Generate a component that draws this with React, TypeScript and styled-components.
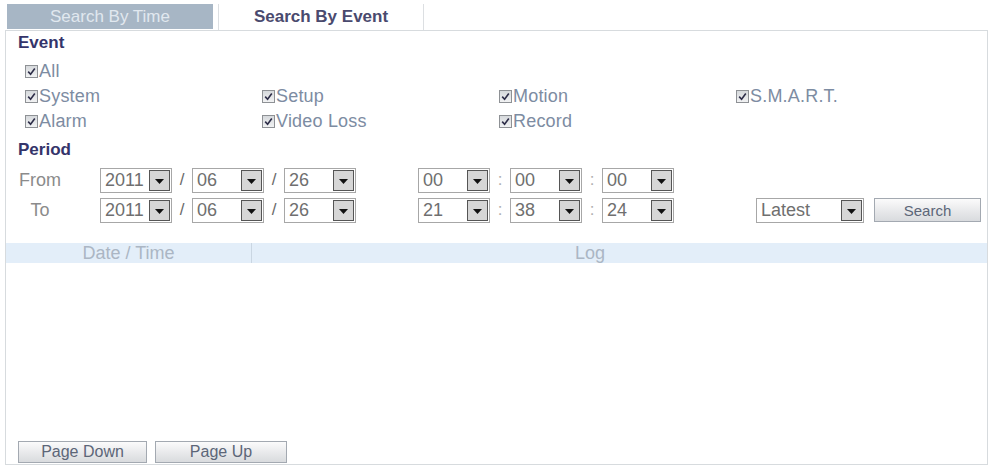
import React from "react";
import styled, { createGlobalStyle } from "styled-components";

const Global = createGlobalStyle`
  html, body { margin: 0; padding: 0; background: #ffffff; }
  body { font-family: "Liberation Sans", Arial, sans-serif; }
  * { box-sizing: border-box; }
`;

const Page = styled.div`
  width: 990px;
  height: 467px;
  padding-left: 5px;
  overflow: hidden;
`;

const TabBar = styled.div`
  display: flex;
  align-items: flex-start;
  height: 30px;
  padding: 4px 0 0 2px;
  gap: 5px;
`;

const Tab = styled.div<{ $active?: boolean }>`
  width: 206px;
  height: ${(p) => (p.$active ? "26px" : "25px")};
  display: flex;
  align-items: center;
  justify-content: center;
  font-size: 17px;
  font-weight: ${(p) => (p.$active ? 700 : 400)};
  color: ${(p) => (p.$active ? "#4a4a6e" : "#e1e8ef")};
  background: ${(p) => (p.$active ? "#ffffff" : "#a7b6c5")};
  border-left: ${(p) => (p.$active ? "1px solid #dcdfe2" : "none")};
  border-right: ${(p) => (p.$active ? "1px solid #dcdfe2" : "none")};
`;

const Panel = styled.div`
  width: 983px;
  height: 435px;
  border: 1px solid #d7dbde;
  display: flex;
  flex-direction: column;
`;

const Heading = styled.div<{ $top: number }>`
  margin: ${(p) => p.$top}px 0 0 12px;
  height: 20px;
  line-height: 20px;
  font-size: 17px;
  font-weight: 700;
  color: #34346a;
`;

const CheckGrid = styled.div`
  display: grid;
  grid-template-columns: repeat(4, 237px);
  grid-auto-rows: 25px;
  margin-top: 6px;
  padding-left: 19px;
`;

const CheckItem = styled.label<{ $full?: boolean }>`
  display: flex;
  align-items: center;
  gap: 1px;
  font-size: 18px;
  letter-spacing: 0.2px;
  color: #7d8ca2;
  grid-column: ${(p) => (p.$full ? "1 / -1" : "auto")};
`;

const Box = styled.span`
  width: 13px;
  height: 13px;
  border: 1px solid #8e9195;
  background: linear-gradient(#d6d9dc, #f1f2f3);
  display: flex;
  align-items: center;
  justify-content: center;
`;

const FormRows = styled.div`
  margin-top: 5px;
`;

const FormRow = styled.div`
  display: flex;
  align-items: center;
  height: 30px;
`;

const RowLabel = styled.div`
  width: 68px;
  margin-right: 26px;
  text-align: center;
  font-size: 18px;
  color: #8b8b8b;
`;

const Select = styled.div<{ $w: number }>`
  width: ${(p) => p.$w}px;
  height: 25px;
  border: 1px solid #a7a7a7;
  background: #ffffff;
  display: flex;
  align-items: center;
  padding-left: 4px;
  font-size: 18px;
  color: #6f6f6f;
`;

const Arrow = styled.span`
  margin-left: auto;
  margin-right: 1px;
  width: 21px;
  height: 21px;
  border: 1px solid #555555;
  background: #d6d6d6;
  display: flex;
  align-items: center;
  justify-content: center;
  padding-top: 3px;
`;

const Sep = styled.span<{ $light?: boolean }>`
  width: 20px;
  text-align: center;
  font-size: 17px;
  color: ${(p) => (p.$light ? "#b0b0b0" : "#6a6a6a")};
`;

const TimeGroup = styled.div`
  display: flex;
  align-items: center;
  margin-left: 62px;
`;

const QueryGroup = styled.div`
  display: flex;
  align-items: center;
  margin-left: 82px;
  gap: 10px;
`;

const Button = styled.button<{ $w: number; $h: number; $fs: number }>`
  width: ${(p) => p.$w}px;
  height: ${(p) => p.$h}px;
  padding: 0;
  border: 1px solid #a3a9b1;
  background: linear-gradient(#fbfbfb, #e6e7e9 60%, #d9dbde);
  font-family: "Liberation Sans", Arial, sans-serif;
  font-size: ${(p) => p.$fs}px;
  color: #5c6678;
`;

const TableHead = styled.div`
  margin-top: 18px;
  height: 20px;
  display: flex;
  background: #e3eef9;
  font-size: 18px;
  line-height: 20px;
  color: #abb6c4;
`;

const HeadCell = styled.div<{ $w: number; $divider?: boolean }>`
  width: ${(p) => p.$w}px;
  text-align: center;
  border-right: ${(p) => (p.$divider ? "1px solid #cad6e2" : "none")};
`;

const TableBody = styled.div`
  flex: 1;
`;

const Footer = styled.div`
  display: flex;
  gap: 8px;
  padding: 0 0 1px 12px;
`;

const Check = () => (
  <svg width="9" height="9" viewBox="0 0 9 9">
    <path d="M1.2 4.6 L3.6 7.2 L7.8 1.6" fill="none" stroke="#2d2d48" strokeWidth="1.6" />
  </svg>
);

const Tri = () => (
  <svg width="9" height="5" viewBox="0 0 9 5">
    <path d="M0 0 H9 L4.5 5 Z" fill="#111" />
  </svg>
);

const Checkbox = ({ label, full }: { label: string; full?: boolean }) => (
  <CheckItem $full={full}>
    <Box>
      <Check />
    </Box>
    {label}
  </CheckItem>
);

const Drop = ({ value, w = 72 }: { value: string; w?: number }) => (
  <Select $w={w}>
    {value}
    <Arrow>
      <Tri />
    </Arrow>
  </Select>
);

const DateTimeRow = ({
  label,
  date,
  time,
  children,
}: {
  label: string;
  date: [string, string, string];
  time: [string, string, string];
  children?: React.ReactNode;
}) => (
  <FormRow>
    <RowLabel>{label}</RowLabel>
    <Drop value={date[0]} />
    <Sep>/</Sep>
    <Drop value={date[1]} />
    <Sep>/</Sep>
    <Drop value={date[2]} />
    <TimeGroup>
      <Drop value={time[0]} />
      <Sep $light>:</Sep>
      <Drop value={time[1]} />
      <Sep $light>:</Sep>
      <Drop value={time[2]} />
    </TimeGroup>
    {children}
  </FormRow>
);

export default function App() {
  return (
    <>
      <Global />
      <Page>
        <TabBar>
          <Tab>Search By Time</Tab>
          <Tab $active>Search By Event</Tab>
        </TabBar>
        <Panel>
          <Heading $top={2}>Event</Heading>
          <CheckGrid>
            <Checkbox label="All" full />
            <Checkbox label="System" />
            <Checkbox label="Setup" />
            <Checkbox label="Motion" />
            <Checkbox label="S.M.A.R.T." />
            <Checkbox label="Alarm" />
            <Checkbox label="Video Loss" />
            <Checkbox label="Record" />
          </CheckGrid>
          <Heading $top={6}>Period</Heading>
          <FormRows>
            <DateTimeRow label="From" date={["2011", "06", "26"]} time={["00", "00", "00"]} />
            <DateTimeRow label="To" date={["2011", "06", "26"]} time={["21", "38", "24"]}>
              <QueryGroup>
                <Drop value="Latest" w={108} />
                <Button $w={107} $h={24} $fs={15}>Search</Button>
              </QueryGroup>
            </DateTimeRow>
          </FormRows>
          <TableHead>
            <HeadCell $w={246} $divider>Date / Time</HeadCell>
            <HeadCell $w={676}>Log</HeadCell>
          </TableHead>
          <TableBody />
          <Footer>
            <Button $w={129} $h={22} $fs={16}>Page Down</Button>
            <Button $w={132} $h={22} $fs={16}>Page Up</Button>
          </Footer>
        </Panel>
      </Page>
    </>
  );
}
